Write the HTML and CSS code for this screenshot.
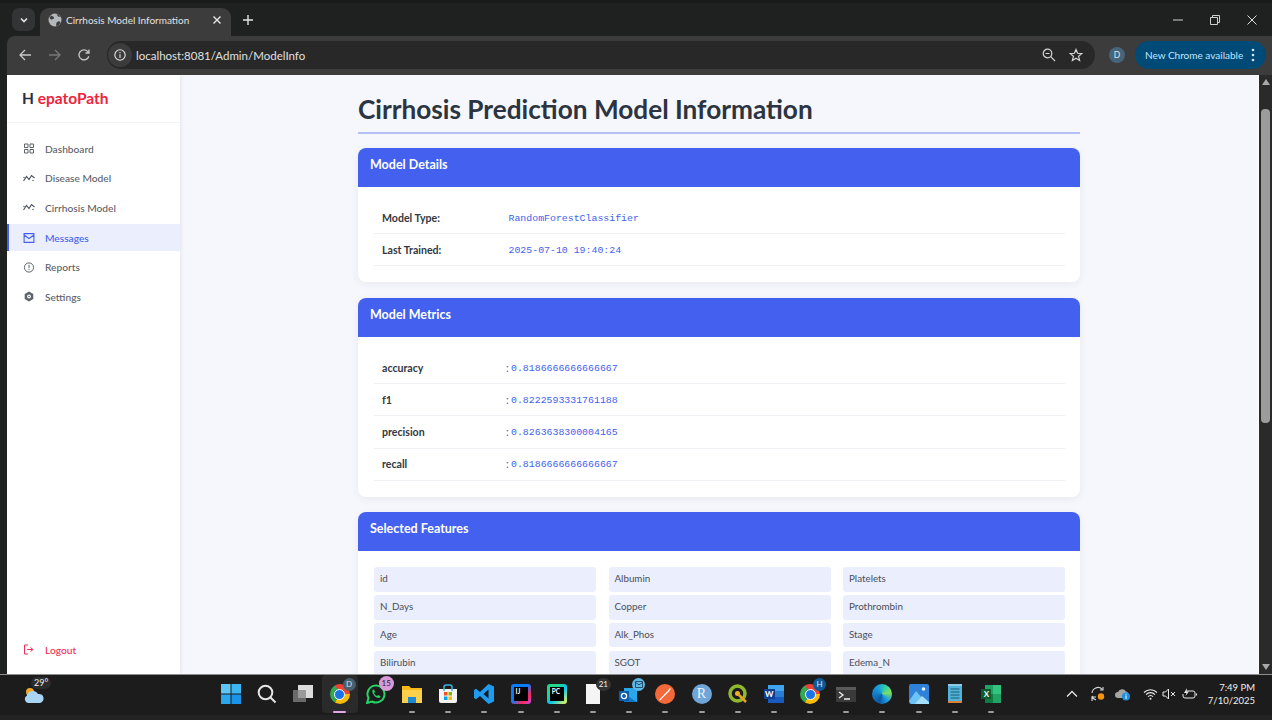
FILE: index.html
```html
<!DOCTYPE html>
<html lang="en">
<head>
    <meta charset="UTF-8">
    <title>Cirrhosis Model Information</title>
    <link rel="stylesheet" href="styles.css">
</head>
<body>
    <!-- browser chrome -->
    <div class="tabstrip">
        <div class="tab-menu">
            <svg width="10" height="10" viewBox="0 0 10 10"><path d="M2 3.5 5 6.5 8 3.5" fill="none" stroke="#e3e3e3" stroke-width="1.6"/></svg>
        </div>
        <div class="tab">
            <svg class="globe" width="14" height="14" viewBox="0 0 14 14"><circle cx="7" cy="7" r="6.5" fill="#b5b8bb"/><path d="M3 2.5 6 4 5.5 6 3 6.5 1.5 5ZM8 13 8.5 9.5 11 8 12.5 9.5 10.5 12.5ZM8.5 1 10 3.5 12 4 11 2Z" fill="#3c3c3c"/></svg>
            <span class="tab-title">Cirrhosis Model Information</span>
            <svg class="tab-x" width="10" height="10" viewBox="0 0 10 10"><path d="M1.5 1.5 8.5 8.5M8.5 1.5 1.5 8.5" stroke="#e8e8e8" stroke-width="1.4"/></svg>
        </div>
        <svg class="new-tab" width="12" height="12" viewBox="0 0 12 12"><path d="M6 1V11M1 6H11" stroke="#e3e3e3" stroke-width="1.4"/></svg>
        <div class="win-buttons">
            <svg width="10" height="10" viewBox="0 0 10 10"><path d="M0 5H10" stroke="#d0d0d0"/></svg>
            <svg width="10" height="10" viewBox="0 0 10 10"><path d="M.5 2.5H7.5V9.5H.5ZM2.5 2.5V.5H9.5V7.5H7.5" fill="none" stroke="#d0d0d0"/></svg>
            <svg width="10" height="10" viewBox="0 0 10 10"><path d="M.5.5 9.5 9.5M9.5.5.5 9.5" stroke="#e0e0e0"/></svg>
        </div>
    </div>

    <div class="toolbar">
        <svg class="tool" width="14" height="14" viewBox="0 0 14 14"><path d="M13 7H2M7 2 2 7 7 12" fill="none" stroke="#c7c7c7" stroke-width="1.3"/></svg>
        <svg class="tool" width="14" height="14" viewBox="0 0 14 14"><path d="M1 7H12M7 2 12 7 7 12" fill="none" stroke="#777" stroke-width="1.3"/></svg>
        <svg class="tool" width="14" height="14" viewBox="0 0 14 14"><path d="M11.8 8.2A5 5 0 1 1 10.6 3.4L12 5M12 1.5V5H8.5" fill="none" stroke="#c7c7c7" stroke-width="1.3"/></svg>
        <div class="omnibox">
            <span class="site-info">
                <svg width="12" height="12" viewBox="0 0 12 12"><circle cx="6" cy="6" r="5.2" fill="none" stroke="#e3e3e3" stroke-width="1.1"/><path d="M6 5.2V9M6 3V4.2" stroke="#e3e3e3" stroke-width="1.1"/></svg>
            </span>
            <span class="url">localhost:8081/Admin/ModelInfo</span>
            <svg class="omni-icon" width="14" height="14" viewBox="0 0 14 14"><circle cx="5.5" cy="5.5" r="4.3" fill="none" stroke="#d5d5d5" stroke-width="1.2"/><path d="M3.5 5.5H7.5M8.7 8.7 13 13" stroke="#d5d5d5" stroke-width="1.2"/></svg>
            <svg class="omni-icon" width="14" height="14" viewBox="0 0 14 14"><path d="M7 1.5 8.6 5.3 12.8 5.6 9.6 8.3 10.6 12.4 7 10.2 3.4 12.4 4.4 8.3 1.2 5.6 5.4 5.3Z" fill="none" stroke="#d5d5d5" stroke-width="1.2"/></svg>
        </div>
        <span class="avatar">D</span>
        <div class="update-pill">
            <span>New Chrome available</span>
            <svg class="kebab" width="4" height="14" viewBox="0 0 4 14"><circle cx="2" cy="2" r="1.3" fill="#d6e6f2"/><circle cx="2" cy="7" r="1.3" fill="#d6e6f2"/><circle cx="2" cy="12" r="1.3" fill="#d6e6f2"/></svg>
        </div>
    </div>

    <!-- the page itself -->
    <div class="viewport">
        <aside class="sidebar">
            <div class="logo"><span class="logo-h">H</span> epatoPath</div>
            <nav class="nav">
                <a class="nav-item">
                    <svg width="11" height="11" viewBox="0 0 11 11"><path d="M1 1H4.500V4.500H1ZM6.500 1H10V4.500H6.500ZM1 6.500H4.500V10H1ZM6.500 6.500H10V10H6.500Z" fill="none" stroke="#5f646b" stroke-width="1"/></svg>
                    Dashboard
                </a>
                <a class="nav-item">
                    <svg width="12" height="11" viewBox="0 0 12 11"><path d="M.5 8 3.500 3.500 6 6.500 8.500 2.500 11.500 5" fill="none" stroke="#4d5258" stroke-width="1.100"/><circle cx="1" cy="4.500" r=".7" fill="#4d5258"/><circle cx="10" cy="7.500" r=".7" fill="#4d5258"/></svg>
                    Disease Model
                </a>
                <a class="nav-item">
                    <svg width="12" height="11" viewBox="0 0 12 11"><path d="M.5 8 3.500 3.500 6 6.500 8.500 2.500 11.500 5" fill="none" stroke="#4d5258" stroke-width="1.100"/><circle cx="1" cy="4.500" r=".7" fill="#4d5258"/><circle cx="10" cy="7.500" r=".7" fill="#4d5258"/></svg>
                    Cirrhosis Model
                </a>
                <a class="nav-item active">
                    <svg width="11" height="10" viewBox="0 0 11 10"><path d="M.6.6H10.400V9.400H.6ZM.6 2 5.500 5.500 10.400 2" fill="none" stroke="#4361ee" stroke-width="1.100"/></svg>
                    Messages
                </a>
                <a class="nav-item">
                    <svg width="11" height="11" viewBox="0 0 11 11"><circle cx="5.500" cy="5.500" r="4.600" fill="none" stroke="#5f646b" stroke-width="1"/><path d="M5.500 2.800V6.200M5.500 7.200V8.200" stroke="#5f646b" stroke-width="1"/></svg>
                    Reports
                </a>
                <a class="nav-item">
                    <svg width="11" height="11" viewBox="0 0 11 11"><path d="M5.500 .6 9.800 3V8L5.500 10.400 1.200 8V3Z" fill="#5f646b"/><circle cx="5.500" cy="5.500" r="1.900" fill="#fff"/><circle cx="5.500" cy="5.500" r=".8" fill="#5f646b"/></svg>
                    Settings
                </a>
            </nav>
            <a class="nav-item logout">
                <svg width="11" height="11" viewBox="0 0 11 11"><path d="M4.500 1H1V10H4.500" fill="none" stroke="#ef2f55" stroke-width="1"/><path d="M3.800 5.500H9M7 3.500 9.500 5.500 7 7.500" fill="none" stroke="#ef2f55" stroke-width="1"/></svg>
                Logout
            </a>
        </aside>

        <main class="main">
            <div class="content">
                <h1 class="page-title">Cirrhosis Prediction Model Information</h1>

                <section class="card">
                    <h2 class="card-header">Model Details</h2>
                    <div class="card-body">
                        <div class="row"><span class="row-label">Model Type:</span><span class="row-value">RandomForestClassifier</span></div>
                        <div class="row"><span class="row-label">Last Trained:</span><span class="row-value">2025-07-10 19:40:24</span></div>
                    </div>
                </section>

                <section class="card">
                    <h2 class="card-header">Model Metrics</h2>
                    <div class="card-body">
                        <div class="row metric"><span class="row-label">accuracy</span><span class="colon">:</span><span class="row-value">0.8186666666666667</span></div>
                        <div class="row metric"><span class="row-label">f1</span><span class="colon">:</span><span class="row-value">0.8222593331761188</span></div>
                        <div class="row metric"><span class="row-label">precision</span><span class="colon">:</span><span class="row-value">0.8263638300004165</span></div>
                        <div class="row metric"><span class="row-label">recall</span><span class="colon">:</span><span class="row-value">0.8186666666666667</span></div>
                    </div>
                </section>

                <section class="card">
                    <h2 class="card-header">Selected Features</h2>
                    <div class="card-body features">
                        <div class="feature">id</div>
                        <div class="feature">Albumin</div>
                        <div class="feature">Platelets</div>
                        <div class="feature">N_Days</div>
                        <div class="feature">Copper</div>
                        <div class="feature">Prothrombin</div>
                        <div class="feature">Age</div>
                        <div class="feature">Alk_Phos</div>
                        <div class="feature">Stage</div>
                        <div class="feature">Bilirubin</div>
                        <div class="feature">SGOT</div>
                        <div class="feature">Edema_N</div>
                    </div>
                </section>
            </div>
        </main>

        <div class="scrollbar">
            <svg width="10" height="8" viewBox="0 0 10 8"><path d="M5 1 9 7H1Z" fill="#a8a8a8"/></svg>
            <div class="scroll-track"><div class="scroll-thumb"></div></div>
            <svg width="10" height="8" viewBox="0 0 10 8"><path d="M5 7 9 1H1Z" fill="#a8a8a8"/></svg>
        </div>
    </div>

    <!-- windows taskbar -->
    <div class="taskbar">
        <div class="weather">
            <svg width="22" height="22" viewBox="0 0 22 22"><circle cx="7" cy="9" r="4" fill="#f5a623"/><path d="M5 20A4 4 0 0 1 4 12.500 6 6 0 0 1 15 11 4.500 4.500 0 0 1 17 20Z" fill="#a9d4f3"/></svg>
            <span class="temp">29°</span>
        </div>
        <div class="apps">
            <div class="app">
                <svg width="20" height="20" viewBox="0 0 20 20"><path d="M0 0H9.500V9.500H0Z" fill="#5ec6f5"/><path d="M10.500 0H20V9.500H10.500Z" fill="#3db5f2"/><path d="M0 10.500H9.500V20H0Z" fill="#2ba6ef"/><path d="M10.500 10.500H20V20H10.500Z" fill="#1a93e8"/></svg>
            </div>
            <div class="app">
                <svg width="20" height="20" viewBox="0 0 20 20"><circle cx="8.500" cy="8.500" r="6.800" fill="none" stroke="#e6e6e6" stroke-width="2"/><path d="M13.500 13.500 18.500 18.500" stroke="#e6e6e6" stroke-width="2"/></svg>
            </div>
            <div class="app">
                <svg width="20" height="20" viewBox="0 0 20 20"><path d="M0 6H13V18H0Z" fill="#6a6a6a"/><path d="M5 1H20V14H5Z" fill="#dcdcdc"/><path d="M5 6H13V14H5Z" fill="#9a9a9a"/></svg>
            </div>
            <div class="app app-active">
                <span class="chrome"></span>
                <span class="badge badge-slate">D</span>
                <span class="bar bar-pink"></span>
            </div>
            <div class="app">
                <svg width="20" height="20" viewBox="0 0 20 20"><path d="M1 19 2.500 14A8.500 8.500 0 1 1 6 17.500Z" fill="none" stroke="#25d366" stroke-width="2"/><path d="M6.500 6 8 5.500 9 8 8 9.200A6 6 0 0 0 11 12L12.200 11 14.500 12.200 14 13.800C10 14.800 5.500 10 6.500 6Z" fill="#25d366"/></svg>
                <span class="badge badge-pink">15</span>
            </div>
            <div class="app">
                <svg width="20" height="20" viewBox="0 0 20 20"><path d="M0 2H7L9 4H20V19H0Z" fill="#f7b916"/><path d="M0 6H20V19H0Z" fill="#fbd14b"/><path d="M6 13H14V19H6Z" fill="#1d88d6"/></svg>
                <span class="bar"></span>
            </div>
            <div class="app">
                <svg width="20" height="20" viewBox="0 0 20 20"><path d="M1 5H19V17A2 2 0 0 1 17 19H3A2 2 0 0 1 1 17Z" fill="#f3f3f3"/><path d="M6 7V3A2 2 0 0 1 8 1H12A2 2 0 0 1 14 3V7" fill="none" stroke="#35b5e5" stroke-width="1.500"/><path d="M6 8H9.500V11.500H6Z" fill="#f25022"/><path d="M10.500 8H14V11.500H10.500Z" fill="#7fba00"/><path d="M6 12.500H9.500V16H6Z" fill="#00a4ef"/><path d="M10.500 12.500H14V16H10.500Z" fill="#ffb900"/></svg>
                <span class="bar"></span>
            </div>
            <div class="app">
                <svg width="20" height="20" viewBox="0 0 20 20"><path d="M14.500 0 20 2.500V17.500L14.500 20 6 12 2 15.200 0 14V6L2 4.800 6 8ZM14.500 5.500 9.500 10 14.500 14.500Z" fill="#1f9cf0"/></svg>
                <span class="bar"></span>
            </div>
            <div class="app">
                <span class="jb jb-ij"><span class="jb-inner">IJ</span></span>
                <span class="bar"></span>
            </div>
            <div class="app">
                <span class="jb jb-pc"><span class="jb-inner">PC</span></span>
                <span class="bar"></span>
            </div>
            <div class="app">
                <svg width="20" height="20" viewBox="0 0 20 20"><path d="M3 0H13L17 4V20H3Z" fill="#f4f4f4"/></svg>
                <span class="badge badge-dark">21</span>
                <span class="bar"></span>
            </div>
            <div class="app">
                <svg width="20" height="20" viewBox="0 0 20 20"><path d="M5 4H18V18H5Z" fill="#28a8ea"/><path d="M5 10 18 18H5Z" fill="#0f78c9"/><path d="M0 7H10V17H0Z" fill="#0a5cb0"/><circle cx="5" cy="12" r="2.600" fill="none" stroke="#fff" stroke-width="1.300"/></svg>
                <span class="badge badge-mail">
                    <svg width="8" height="7" viewBox="0 0 8 7"><path d="M.5.5H7.500V6.500H.5ZM.5 1.500 4 3.800 7.500 1.500" fill="none" stroke="#17384d" stroke-width=".8"/></svg>
                </span>
                <span class="bar"></span>
            </div>
            <div class="app">
                <svg width="20" height="20" viewBox="0 0 20 20"><circle cx="10" cy="10" r="10" fill="#f4683a"/><path d="M4 16 13 6.500 15 4 15.800 4.800 14 7.500 5 16.500Z" fill="#fff"/></svg>
                <span class="bar"></span>
            </div>
            <div class="app">
                <span class="r-icon">R</span>
                <span class="bar"></span>
            </div>
            <div class="app">
                <svg width="20" height="20" viewBox="0 0 20 20"><circle cx="9.500" cy="9.500" r="7.500" fill="none" stroke="#8fb82d" stroke-width="3.500"/><circle cx="9.500" cy="9.500" r="2.500" fill="#f0b323"/><path d="M10 10 18 18" stroke="#e8a020" stroke-width="2.500"/></svg>
                <span class="bar"></span>
            </div>
            <div class="app">
                <svg width="20" height="20" viewBox="0 0 20 20"><path d="M4 1H20V19H4Z" fill="#2b7cd3"/><path d="M4 1H20V7H4Z" fill="#41a5ee"/><path d="M4 13H20V19H4Z" fill="#185abd"/><path d="M0 5H11V15H0Z" fill="#103f91"/></svg>
                <span class="w-letter">W</span>
                <span class="bar"></span>
            </div>
            <div class="app">
                <span class="chrome"></span>
                <span class="badge badge-blue">H</span>
                <span class="bar"></span>
            </div>
            <div class="app">
                <svg width="20" height="20" viewBox="0 0 20 20"><path d="M0 3H20V18H0Z" fill="#3a3a3a"/><path d="M0 3H20V6H0Z" fill="#5a5a5a"/><path d="M3 8 7 11 3 14M8 15H14" fill="none" stroke="#eee" stroke-width="1.300"/></svg>
                <span class="bar"></span>
            </div>
            <div class="app">
                <span class="edge"></span>
                <span class="bar"></span>
            </div>
            <div class="app">
                <svg width="20" height="20" viewBox="0 0 20 20"><rect width="20" height="20" rx="2" fill="#2f80d8"/><circle cx="14.500" cy="5" r="1.800" fill="#e3f1fb"/><path d="M0 17 7 7 13 14 10 20H2Z" fill="#6cc3f3"/><path d="M6 20 13 12 20 18V20Z" fill="#a4e0fa"/></svg>
                <span class="bar"></span>
            </div>
            <div class="app">
                <svg width="20" height="20" viewBox="0 0 20 20"><path d="M3 1H17V19H3Z" fill="#52b3d9"/><path d="M3 17H17V19H3Z" fill="#d9803a"/><path d="M5.500 5H14.500M5.500 8H14.500M5.500 11H14.500M5.500 14H14.500" stroke="#1c5a78"/><path d="M3 0H17V2H3Z" fill="#8ccbe5"/></svg>
                <span class="bar"></span>
            </div>
            <div class="app">
                <svg width="20" height="20" viewBox="0 0 20 20"><path d="M4 1H20V19H4Z" fill="#21a366"/><path d="M12 1H20V10H12Z" fill="#33c481"/><path d="M4 10H12V19H4Z" fill="#107c41"/><path d="M0 5H10V15H0Z" fill="#0b5c30"/></svg>
                <span class="x-letter">X</span>
                <span class="bar"></span>
            </div>
        </div>

        <div class="tray">
            <span class="tray-item w-chevron"><svg width="12" height="8" viewBox="0 0 12 8"><path d="M1 6.500 6 1.500 11 6.500" fill="none" stroke="#e6e6e6" stroke-width="1.300"/></svg></span>
            <span class="tray-item w-sync"><svg width="16" height="16" viewBox="0 0 16 16"><path d="M2 7A6 6 0 0 1 12 3M13 1V4H10M2 10A6 6 0 0 0 6 14M2 15V11H6" fill="none" stroke="#d8d8d8" stroke-width="1.100"/><circle cx="11" cy="10.500" r="3.200" fill="#f7930e"/></svg></span>
            <span class="tray-item w-cloud"><svg width="16" height="14" viewBox="0 0 16 14"><path d="M3 11A3 3 0 0 1 3 5 4.500 4.500 0 0 1 11 4.500 3 3 0 0 1 13 9V11Z" fill="#a5a5a5"/><circle cx="11" cy="9.500" r="4" fill="#1f8fe0"/><path d="M11 8.500V12M11 6.800V7.800" stroke="#fff"/></svg></span>
            <span class="tray-item w-wifi"><svg width="15" height="12" viewBox="0 0 15 12"><path d="M1 4.500A9 9 0 0 1 14 4.500M3 6.700A6 6 0 0 1 12 6.700M5 8.800A3 3 0 0 1 10 8.800" fill="none" stroke="#e8e8e8" stroke-width="1.100"/><circle cx="7.500" cy="10.800" r="1" fill="#e8e8e8"/></svg></span>
            <span class="tray-item w-mute"><svg width="14" height="12" viewBox="0 0 14 12"><path d="M1 4H3.500L6.500 1V11L3.500 8H1Z" fill="none" stroke="#e8e8e8"/><path d="M9 4 13 8M13 4 9 8" stroke="#e8e8e8"/></svg></span>
            <span class="tray-item w-battery"><svg width="15" height="13" viewBox="0 0 15 13"><path d="M4 3H11A2 2 0 0 1 13 5V8A2 2 0 0 1 11 10H3A2 2 0 0 1 1 8V6M14.500 5.500V7.500" fill="none" stroke="#e8e8e8"/><path d="M5 0 2 5H4.500L3.500 8 7 3.500H4.500Z" fill="#e8e8e8"/></svg></span>
            <div class="clock"><span>7:49 PM</span><span>7/10/2025</span></div>
        </div>
    </div>
</body>
</html>
```

FILE: styles.css
```css
* {
    box-sizing: border-box;
}
html, body {
    height: 100%;
}
body {
    margin: 0;
    height: 720px;
    overflow: hidden;
    display: flex;
    flex-direction: column;
    background-color: #1f2020;
    font-family: Lato, Arial, sans-serif;
}

/* tab strip */
.tabstrip {
    height: 36px;
    flex-shrink: 0;
    display: flex;
    align-items: flex-end;
    padding-left: 12px;
    border-top: 3px solid #191a1a;
}
.tab-menu {
    width: 23px;
    height: 23px;
    margin-bottom: 5px;
    background: #333435;
    border-radius: 7px;
    display: flex;
    align-items: center;
    justify-content: center;
}
.tab {
    width: 191px;
    height: 28px;
    margin-left: 5px;
    padding: 0 8px 5px;
    background: #3c3c3c;
    border-radius: 9px 9px 0 0;
    display: flex;
    align-items: center;
    gap: 4px;
}
.globe {
    flex-shrink: 0;
}
.tab-title {
    flex: 1;
    font-size: 10px;
    color: #e2e2e2;
    white-space: nowrap;
}
.tab-x {
    margin-right: 1px;
}
.new-tab {
    margin: 0 0 10px 11px;
}
.win-buttons {
    margin-left: auto;
    margin-bottom: 11px;
    padding-right: 15px;
    display: flex;
    gap: 27px;
}

/* toolbar */
.toolbar {
    height: 39px;
    flex-shrink: 0;
    margin-left: 7px;
    padding: 5px 6px 6px 11px;
    background: #3c3c3c;
    border-radius: 8px 0 0 0;
    display: flex;
    align-items: center;
}
.tool {
    margin-right: 15.500px;
}
.omnibox {
    width: 988px;
    height: 28px;
    margin-left: .5px;
    padding-right: 12px;
    background: #282828;
    border-radius: 14px;
    display: flex;
    align-items: center;
}
.site-info {
    width: 24px;
    height: 24px;
    margin-left: 1px;
    background: #3c3c3c;
    border-radius: 50%;
    display: flex;
    align-items: center;
    justify-content: center;
}
.url {
    flex: 1;
    margin-left: 4px;
    font-size: 11.500px;
    color: #e0e0e0;
}
.omni-icon {
    margin-left: 13px;
}
.avatar {
    width: 16px;
    height: 16px;
    margin-left: 14px;
    background: #47657a;
    border-radius: 50%;
    color: #dbe7ef;
    font-size: 8.500px;
    line-height: 16px;
    text-align: center;
}
.update-pill {
    width: 131px;
    height: 28px;
    margin-left: 10px;
    padding: 0 11px 0 10px;
    background: #004a77;
    border-radius: 14px;
    color: #c2e7ff;
    font-size: 10px;
    display: flex;
    align-items: center;
    justify-content: space-between;
    white-space: nowrap;
}
.kebab {
    flex-shrink: 0;
}

/* page area */
.viewport {
    height: 599px;
    flex-shrink: 0;
    margin-left: 7px;
    display: flex;
    background: #f5f7fc;
    overflow: hidden;
}
.sidebar {
    width: 173px;
    flex-shrink: 0;
    background: #fff;
    box-shadow: 1px 0 4px rgba(0, 0, 0, 0.08);
    display: flex;
    flex-direction: column;
    padding-bottom: 11px;
}
.logo {
    height: 48px;
    padding-left: 15px;
    border-bottom: 1px solid #f2f3f6;
    color: #ef233c;
    font-size: 15.500px;
    font-weight: 700;
    line-height: 47px;
}
.logo-h {
    color: #2b2d42;
}
.nav {
    flex: 1;
    padding-top: 12px;
}
.nav-item {
    height: 27px;
    margin-bottom: 2.700px;
    padding-left: 14px;
    border-left: 2px solid transparent;
    color: #5b6068;
    font-size: 10.200px;
    font-weight: 500;
    display: flex;
    align-items: center;
    gap: 10px;
}
.nav-item svg {
    width: 12px;
    flex-shrink: 0;
}
.nav-item.active {
    background: #ebeefd;
    border-left-color: #4361ee;
    color: #4361ee;
}
.nav-item.logout {
    color: #ef2f55;
    margin-bottom: 0;
}

.main {
    flex: 1;
    min-width: 0;
    overflow: hidden;
    display: flex;
    justify-content: center;
}
.content {
    width: 722px;
    flex-shrink: 0;
}
.page-title {
    margin: 0 0 14px;
    height: 59px;
    padding-top: 16px;
    border-bottom: 2px solid #b4bff5;
    color: #2b3440;
    font-size: 26.200px;
    font-weight: 700;
    line-height: 36px;
    white-space: nowrap;
}
.card {
    margin-bottom: 15.600px;
    background: #fff;
    border-radius: 8px;
    box-shadow: 0 2px 8px rgba(0, 0, 0, 0.06);
}
.card-header {
    margin: 0;
    height: 39px;
    padding: 0 12px;
    background: #4361ee;
    border-radius: 8px 8px 0 0;
    color: #fff;
    font-size: 12.500px;
    font-weight: 700;
    line-height: 33px;
}
.card-body {
    padding: 15px 15px 16px 16px;
}
.row {
    height: 32.200px;
    padding: 0 8px;
    border-bottom: 1px solid #f0f1f4;
    display: flex;
    align-items: center;
}
.row-label {
    width: 126.500px;
    color: #33383f;
    font-size: 10.600px;
    font-weight: 700;
}
.row-value {
    margin-top: 1px;
    color: #4361ee;
    font-family: "Liberation Mono", "Courier New", monospace;
    font-size: 9.900px;
}
.metric .row-label {
    width: 124px;
}
.colon {
    width: 5px;
    color: #4361ee;
    font-size: 10.500px;
}
.features {
    display: grid;
    grid-template-columns: repeat(3, 1fr);
    gap: 3.300px 12.500px;
    padding-top: 16px;
}
.feature {
    height: 24.500px;
    padding-left: 6px;
    background: #ebeefd;
    border-radius: 3px;
    color: #4a4f57;
    font-size: 9.800px;
    line-height: 23.500px;
}

.scrollbar {
    width: 14px;
    flex-shrink: 0;
    background: #2a2a2a;
    border-left: 1px solid #fff;
    display: flex;
    flex-direction: column;
    align-items: center;
    padding: 3px 0;
}
.scroll-track {
    flex: 1;
    width: 100%;
    padding: 23px 2px 0;
}
.scroll-thumb {
    height: 314px;
    background: #9c9c9c;
    border-radius: 4px;
}

/* taskbar */
.taskbar {
    height: 46px;
    flex-shrink: 0;
    position: relative;
    background: linear-gradient(#1c1c1c 40px, #232323 40px);
    border-top: 1px solid #8d8d8d;
    display: flex;
    align-items: flex-start;
    color: #f0f0f0;
}
.weather {
    width: 213px;
    height: 38px;
    flex-shrink: 0;
    position: relative;
    padding: 8px 0 0 23px;
}
.temp {
    position: absolute;
    top: 2px;
    left: 31px;
    padding: 0 3px;
    background: #2c2c2c;
    border-radius: 7px;
    font-size: 9px;
    line-height: 12px;
}
.apps {
    display: flex;
}
.app {
    width: 36.200px;
    height: 38px;
    position: relative;
    display: flex;
    align-items: center;
    justify-content: center;
}
.app-active {
    background: #2a2a2a;
    border-radius: 4px;
}
.bar {
    position: absolute;
    bottom: 0;
    left: 50%;
    width: 6px;
    height: 2px;
    margin-left: -3px;
    background: #9b9b9b;
    border-radius: 1px;
}
.bar-pink {
    width: 13px;
    margin-left: -6.500px;
    background: #e2a8e6;
}
.badge {
    position: absolute;
    top: 3px;
    left: 21px;
    width: 13px;
    height: 13px;
    border-radius: 50%;
    font-size: 8px;
    line-height: 13px;
    text-align: center;
}
.badge-slate {
    background: #47606f;
    color: #d5e0e7;
}
.badge-pink {
    width: 15px;
    height: 15px;
    top: 1px;
    background: #d99ad9;
    color: #2a1b2b;
    line-height: 15px;
}
.badge-dark {
    width: 15px;
    background: #333;
    color: #eee;
}
.badge-blue {
    background: #0b5a99;
    color: #dcecf7;
}
.badge-mail {
    background: #5fb8e6;
    display: flex;
    align-items: center;
    justify-content: center;
}
.chrome {
    width: 20px;
    height: 20px;
    border-radius: 50%;
    background: conic-gradient(from -30deg, #ea4335 0 120deg, #fbbc05 120deg 240deg, #34a853 240deg 360deg);
    display: flex;
    align-items: center;
    justify-content: center;
}
.chrome::after {
    content: "";
    width: 9px;
    height: 9px;
    border-radius: 50%;
    background: #1a73e8;
    border: 1.500px solid #fff;
}
.jb {
    width: 20px;
    height: 20px;
    padding: 3px;
    border-radius: 3px;
    display: block;
}
.jb-ij {
    background: linear-gradient(135deg, #087cfa 0 45%, #fe2857 75%, #b74af7);
}
.jb-pc {
    background: linear-gradient(135deg, #21d789 0 30%, #07c3f2 55%, #fcf84a);
}
.jb-inner {
    display: block;
    height: 14px;
    background: #000;
    color: #fff;
    font-size: 6.500px;
    font-weight: 700;
    line-height: 9px;
    padding-left: 2px;
}
.r-icon {
    width: 20px;
    height: 20px;
    border-radius: 50%;
    background: #6fa5d8;
    color: #eef5fb;
    font-family: "Liberation Serif", serif;
    font-size: 14px;
    line-height: 20px;
    text-align: center;
}
.w-letter, .x-letter {
    position: absolute;
    left: 8px;
    top: 13px;
    width: 11px;
    color: #fff;
    font-size: 8px;
    font-weight: 700;
    line-height: 12px;
    text-align: center;
}
.edge {
    width: 20px;
    height: 20px;
    border-radius: 50%;
    background: conic-gradient(from 200deg, #0c59a4, #1b9de2 130deg, #36d1a0 190deg, #7fe05c 240deg, #1b9de2 300deg, #0c59a4);
}
.tray {
    margin-left: auto;
    height: 38px;
    padding-right: 17px;
    display: flex;
    align-items: center;
}
.tray-item {
    display: flex;
    justify-content: center;
}
.w-chevron {
    width: 34px;
}
.w-sync {
    width: 18px;
}
.w-cloud {
    width: 33px;
}
.w-wifi {
    width: 22px;
}
.w-mute {
    width: 15px;
}
.w-battery {
    width: 25px;
}
.clock {
    width: 53.500px;
    display: flex;
    flex-direction: column;
    align-items: flex-end;
    font-size: 9.500px;
    line-height: 13.500px;
}
```
